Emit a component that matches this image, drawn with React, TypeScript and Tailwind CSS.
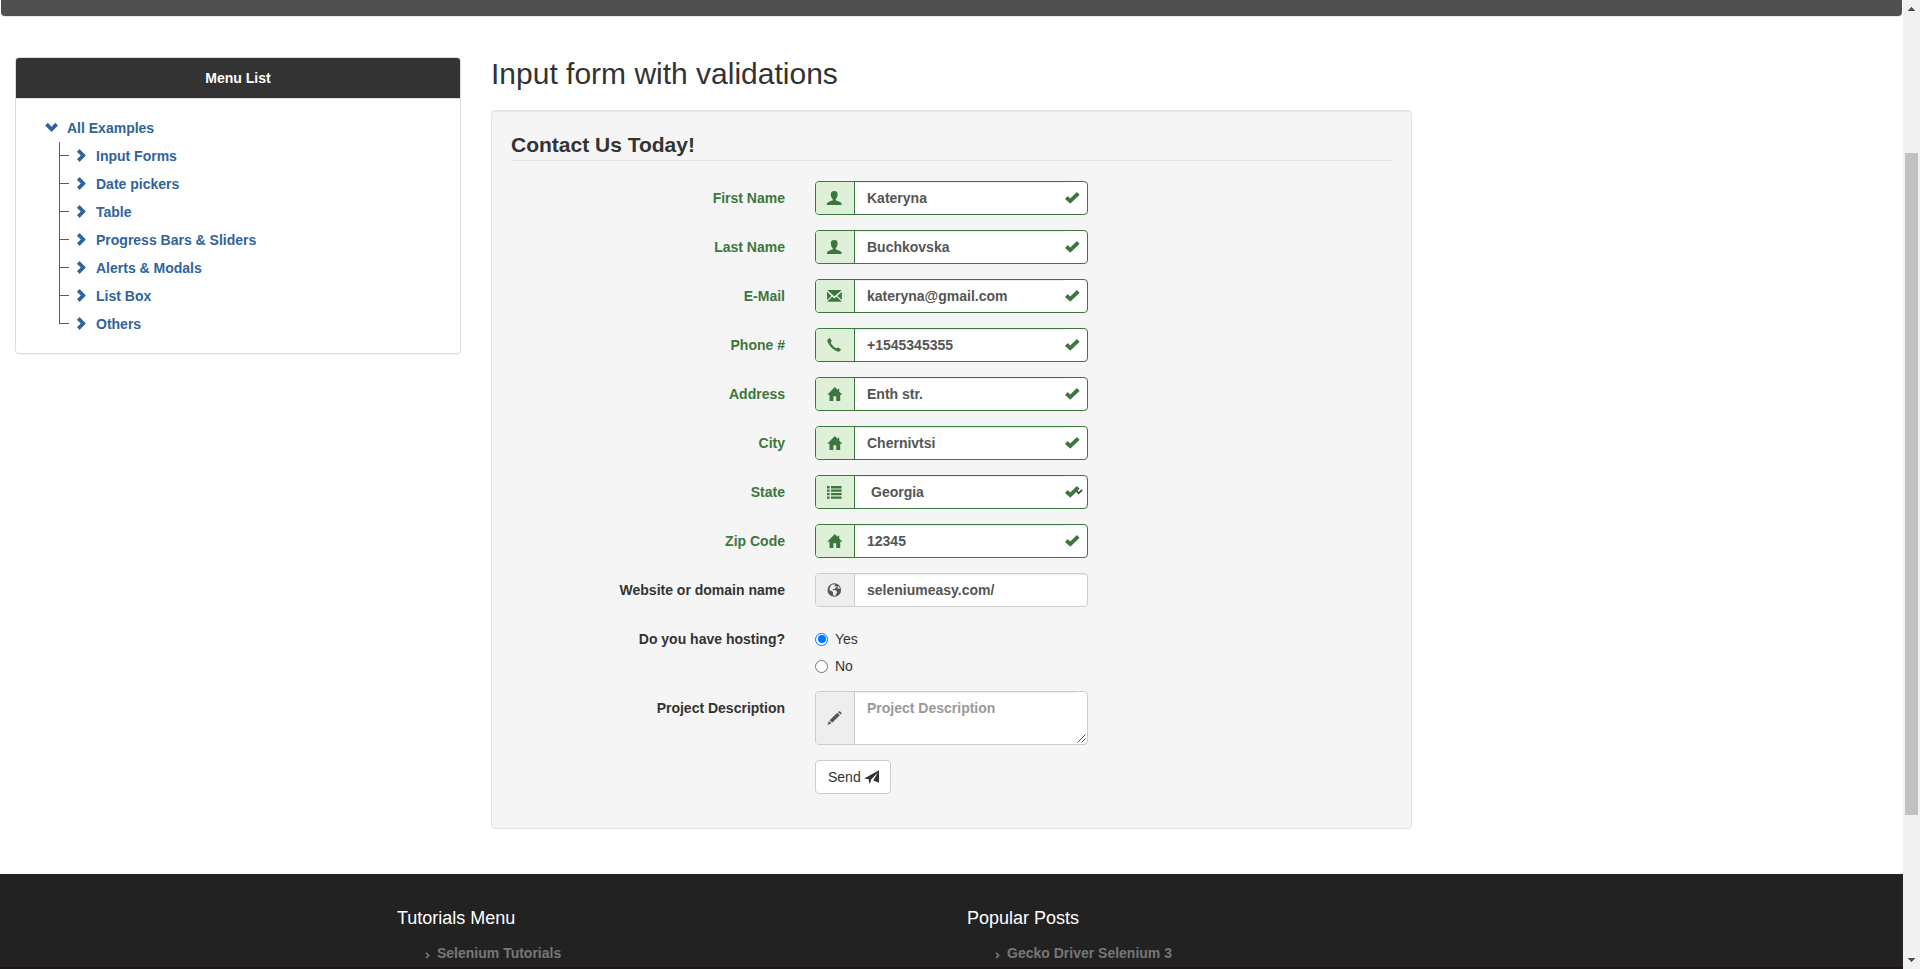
import React from "react";

type IconProps = { className?: string };

const Glyph = ({ className = "", children }: IconProps & { children: React.ReactNode }) => (
  <svg viewBox="0 0 14 14" width="14" height="14" fill="currentColor" className={"shrink-0 overflow-visible " + className}>
    {children}
  </svg>
);

const UserIcon = () => (
  <Glyph>
    <path d="M7.2 0C9.8 0 10.7 1.5 10.6 3.6C10.5 5.4 9.9 6.9 9.1 7.7C8.7 8.1 8.6 8.3 8.6 8.7C8.6 9.2 9.1 9.5 10 9.8C12.8 10.9 14.5 11.4 14.5 12.8V14H0V12.8C0 11.4 1.6 10.9 4.4 9.8C5.3 9.5 5.8 9.2 5.8 8.7C5.8 8.3 5.7 8.1 5.3 7.7C4.5 6.9 3.9 5.4 3.8 3.6C3.7 1.5 4.6 0 7.2 0Z" />
  </Glyph>
);
const MailIcon = () => (
  <Glyph>
    <path d="M.7 1H14.2V1.4L7.4 7.3L.7 1.4ZM0 2.7L4.4 6.9L0 10.9ZM14.8 2.7V10.9L10.4 6.9ZM5.2 7.7L7.4 9.6L9.6 7.7L14.3 12.2V12.8H.5V12.2Z" />
  </Glyph>
);
const PhoneIcon = () => (
  <Glyph>
    <path d="M.8 1.5L2.2 .2C2.6-.1 3 0 3.2 .4L4.6 2.7C4.8 3.1 4.7 3.5 4.4 3.8L3.6 4.6C4.6 6.8 6.9 9.3 9.3 10.5L10.1 9.7C10.4 9.4 10.8 9.3 11.2 9.6L13.5 11C14 11.3 14.1 11.7 13.7 12.1L12.5 13.3C11.9 13.9 10.8 13.7 9.8 13.3C5.9 11.6 1.9 7.3.6 4C.2 3 .2 2.1.8 1.5Z" />
  </Glyph>
);
const HomeIcon = () => (
  <Glyph>
    <path d="M7.8-.1L10.8 3V1.8H12.2V4.5L15.4 7.8H13.2V14H9.2V9.2H6.4V14H2.5V7.8H.3Z" />
  </Glyph>
);
const ListIcon = () => (
  <Glyph>
    <path d="M0 .9H2.6V3.4H0ZM4 .9H14.6V3.4H4ZM0 4.6H2.6V6.7H0ZM4 4.6H14.6V6.7H4ZM0 8H2.6V10.2H0ZM4 8H14.6V10.2H4ZM0 11.5H2.6V13.7H0ZM4 11.5H14.6V13.7H4Z" />
  </Glyph>
);
const GlobeIcon = () => (
  <Glyph>
    <path
      fillRule="evenodd"
      d="M7.3 .2A6.8 6.8 0 1 1 7.3 13.8A6.8 6.8 0 0 1 7.3 .2ZM6.8 1.2L4.8 1.7L3.5 2.8L3.1 4.7L2.3 5.7L2.9 7.4L4.5 8L6 9.1L5.9 11L6.8 12.8L8.3 12.7L9 11.1L10.2 9.5L9.5 7.8L7.6 7L6.3 7.3L5.6 6.2L7.1 5.7L7.9 6.2L8.6 4.7L10 3.6L9.1 2.7L8.2 3.7L7.3 2.6L8.7 1.7ZM11.3 3L10.3 4.8L11.7 5.7L13 5.5L12.3 3.9Z"
    />
  </Glyph>
);
const PencilIcon = () => (
  <Glyph>
    <path d="M11.7.5C12.2 0 12.6 0 13.1.5L14.2 1.6C14.7 2.1 14.7 2.5 14.2 3L13.5 3.6L11 1.1ZM10.3 1.8L12.8 4.3L5.2 11.7L2.7 9.2ZM2 9.9L4.4 12.3L.4 14Z" />
  </Glyph>
);
const SendIcon = () => (
  <svg viewBox="0 0 16 14" width="16" height="14" fill="currentColor" className="mb-px ml-[3px] shrink-0">
    <path d="M15 .2V12.7L9.3 10.5L13.9 2.4L6.9 9.8V11.6L5.4 13.8L4.7 9.2L.2 8.6Z" />
  </svg>
);
const CheckIcon = ({ className = "" }: IconProps) => (
  <svg viewBox="0 0 15 12" width="15" height="12" fill="currentColor" className={className}>
    <path d="M.3 6.6L2.3 4.5C2.6 4.2 2.9 4.2 3.2 4.5L5.2 6.4L11.4.6C11.7.3 12 .3 12.3.5L14.2 2.3C14.5 2.6 14.5 2.9 14.2 3.2L5.7 11.2C5.4 11.5 5.1 11.5 4.8 11.2L.3 7.3C.1 7.1.1 6.9.3 6.6Z" />
  </svg>
);
const ChevronIcon = ({ className = "" }: IconProps) => (
  <svg viewBox="0 0 9 13" width="9" height="13" fill="currentColor" className={"shrink-0 " + className}>
    <path d="M.3 2.3L2.1.5C2.4.2 2.7.2 3 .5L8.4 5.9C8.7 6.2 8.7 6.6 8.4 6.9L3 12.4C2.7 12.7 2.4 12.7 2.1 12.4L.3 10.6C0 10.3 0 10 .3 9.7L3.8 6.4L.3 3.2C0 2.9 0 2.6.3 2.3Z" />
  </svg>
);

const fields = [
  { label: "First Name", value: "Kateryna", Icon: UserIcon },
  { label: "Last Name", value: "Buchkovska", Icon: UserIcon },
  { label: "E-Mail", value: "kateryna@gmail.com", Icon: MailIcon },
  { label: "Phone #", value: "+1545345355", Icon: PhoneIcon },
  { label: "Address", value: "Enth str.", Icon: HomeIcon },
  { label: "City", value: "Chernivtsi", Icon: HomeIcon },
  { label: "State", value: "Georgia", Icon: ListIcon, select: true },
  { label: "Zip Code", value: "12345", Icon: HomeIcon },
];

const menu = ["Input Forms", "Date pickers", "Table", "Progress Bars & Sliders", "Alerts & Modals", "List Box", "Others"];

function Row({ label, green, children }: { label: string; green?: boolean; children: React.ReactNode }) {
  return (
    <div className="mb-[15px] flex">
      <div className={"w-[274px] shrink-0 pt-[7px] text-right font-bold " + (green ? "text-[#3c763d]" : "text-[#333]")}>{label}</div>
      <div className="ml-[30px] w-[273px] shrink-0">{children}</div>
    </div>
  );
}

function Sidebar() {
  return (
    <aside className="mt-[41px] ml-[15px] h-[297px] w-[446px] shrink-0 rounded-[4px] border border-[#ddd] bg-white shadow-[0_1px_1px_rgba(0,0,0,0.05)]">
      <div className="flex h-[41px] items-center justify-center rounded-t-[3px] border-b border-[#ddd] bg-[#333] font-bold text-white">
        Menu List
      </div>
      <div className="pt-[19px] pl-[29px] font-bold text-[#2f649b]">
        <div className="flex h-5 items-center">
          <span className="flex w-[13px] justify-center">
            <ChevronIcon className="mb-[2px] rotate-90" />
          </span>
          <span className="ml-[9px]">All Examples</span>
        </div>
        <ul className="mt-[4px] ml-[14px]">
          {menu.map((m, i) => (
            <li key={m} className="flex h-7">
              <div className={"flex shrink-0 flex-col border-l border-[#2f649b] " + (i === menu.length - 1 ? "h-[14px]" : "h-7")}>
                <div className="h-[14px] w-[9px] border-b border-[#2f649b]" />
              </div>
              <ChevronIcon className="mt-[7px] ml-[8px]" />
              <span className="ml-[10px] pt-1">{m}</span>
            </li>
          ))}
        </ul>
      </div>
    </aside>
  );
}

function Form() {
  return (
    <section className="ml-[30px] w-[921px] shrink-0">
      <h2 className="mt-[41px] text-[30px] leading-[33px] font-normal">Input form with validations</h2>
      <div className="mt-[20px] h-[719px] rounded-[4px] border border-[#e3e3e3] bg-[#f5f5f5] px-[19px] pt-[19px] shadow-[inset_0_1px_1px_rgba(0,0,0,0.05)]">
        <div className="mb-[20px] h-[31px] border-b border-[#e5e5e5] text-[21px] leading-[30px] font-bold">Contact Us Today!</div>
        {fields.map(({ label, value, Icon, select }) => (
          <Row key={label} label={label} green>
            <div className="flex h-[34px] rounded-[4px] border border-[#3c763d] bg-white">
              <div className="flex w-[39px] shrink-0 items-center rounded-l-[3px] border-r border-[#3c763d] bg-[#dff0d8] pl-[11px] text-[#3c763d]">
                <Icon />
              </div>
              <div className={"flex flex-1 items-center font-bold text-[#555] shadow-[inset_0_1px_1px_rgba(0,0,0,0.075)] " + (select ? "pl-4" : "pl-3")}>{value}</div>
              <div className="relative mt-[10px] mr-[7px] h-3 w-[15px] shrink-0">
                {select && (
                  <svg viewBox="0 0 8 6" width="8" height="6" className="absolute top-[3px] left-[10px]" fill="none" stroke="#444" strokeWidth="1.7">
                    <path d="M1 1.2L3.6 4.2L7.2.9" />
                  </svg>
                )}
                <CheckIcon className="absolute top-0 left-0 text-[#3c763d]" />
              </div>
            </div>
          </Row>
        ))}
        <Row label="Website or domain name">
          <div className="flex h-[34px] rounded-[4px] border border-[#ccc] bg-white">
            <div className="flex w-[39px] shrink-0 items-center rounded-l-[3px] border-r border-[#ccc] bg-[#eee] pl-[11px] text-[#555]">
              <GlobeIcon />
            </div>
            <div className="flex flex-1 items-center pl-3 font-bold text-[#555] shadow-[inset_0_1px_1px_rgba(0,0,0,0.075)]">seleniumeasy.com/</div>
          </div>
        </Row>
        <Row label="Do you have hosting?">
          <div className="h-[54px] pt-[7px]">
            <div className="flex h-5 items-center">
              <span className="flex h-[13px] w-[13px] items-center justify-center rounded-full border border-[#0075ff] bg-white">
                <span className="h-[8px] w-[8px] rounded-full bg-[#0075ff]" />
              </span>
              <span className="ml-[7px]">Yes</span>
            </div>
            <div className="mt-[7px] flex h-5 items-center">
              <span className="h-[13px] w-[13px] rounded-full border border-[#767676] bg-white" />
              <span className="ml-[7px]">No</span>
            </div>
          </div>
        </Row>
        <Row label="Project Description">
          <div className="flex h-[54px] rounded-[4px] border border-[#ccc] bg-white">
            <div className="flex w-[39px] shrink-0 items-center rounded-l-[3px] border-r border-[#ccc] bg-[#eee] pl-[11px] text-[#555]">
              <PencilIcon />
            </div>
            <div className="flex-1 pt-[6px] pl-3 font-bold text-[#999] shadow-[inset_0_1px_1px_rgba(0,0,0,0.075)]">Project Description</div>
            <svg viewBox="0 0 9 9" width="9" height="9" className="mr-px mb-px self-end" fill="none" stroke="#555" strokeWidth="1">
              <path d="M.5 8.5L8.5.5M4.5 8.5L8.5 4.5" />
            </svg>
          </div>
        </Row>
        <Row label="">
          <div className="flex h-[34px] w-[76px] items-center rounded-[4px] border border-[#ccc] bg-white pl-3 text-[#333]">
            Send
            <SendIcon />
          </div>
        </Row>
      </div>
    </section>
  );
}

function FooterColumn({ title, link }: { title: string; link: string }) {
  return (
    <div className="w-[570px] shrink-0">
      <h4 className="text-[18px] leading-5 font-normal text-white">{title}</h4>
      <div className="mt-[15px] ml-[28px] flex h-5 items-center font-bold text-[#777]">
        <svg viewBox="0 0 5 7" width="5" height="7" className="mt-[4px] mr-[7px]" fill="none" stroke="currentColor" strokeWidth="1.6">
          <path d="M1 .7L3.7 3.4L1 6.1" />
        </svg>
        {link}
      </div>
    </div>
  );
}

export default function App() {
  return (
    <div className="flex h-[969px] w-[1920px] overflow-hidden bg-white font-['Liberation_Sans',Arial,sans-serif] text-[14px] leading-5 text-[#333]">
      <div className="flex w-[1903px] shrink-0 flex-col">
        <div className="mx-px h-4 shrink-0 rounded-b-[4px] bg-[#505050] shadow-[0_1px_0_#e7e7e7]" />
        <main className="flex h-[858px] shrink-0">
          <Sidebar />
          <Form />
        </main>
        <footer className="flex flex-1 border-b-2 border-[#1c1719] bg-[#222] pt-[34px] pl-[397px]">
          <FooterColumn title="Tutorials Menu" link="Selenium Tutorials" />
          <FooterColumn title="Popular Posts" link="Gecko Driver Selenium 3" />
        </footer>
      </div>
      <div className="flex w-[17px] shrink-0 flex-col items-center bg-[#f1f1f1]">
        <svg viewBox="0 0 7 4" width="7" height="4" className="mt-[7px]" fill="#505050" shapeRendering="crispEdges">
          <path d="M3 0H4V1H5V2H6V3H7V4H0V3H1V2H2V1H3Z" />
        </svg>
        <div className="mt-[142px] h-[662px] w-[13px] bg-[#c1c1c1]" />
        <svg viewBox="0 0 7 4" width="7" height="4" className="mt-[143px]" fill="#505050" shapeRendering="crispEdges">
          <path d="M3 4H4V3H5V2H6V1H7V0H0V1H1V2H2V3H3Z" />
        </svg>
      </div>
    </div>
  );
}
